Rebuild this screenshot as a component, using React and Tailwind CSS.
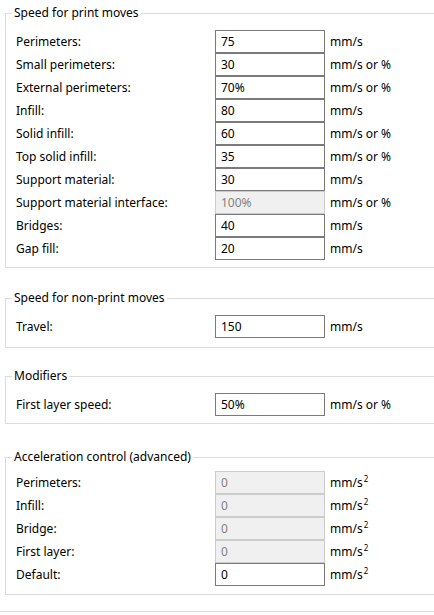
import React from 'react';

const groups = [
  {
    title: 'Speed for print moves',
    cls: 'mt-[5px] pt-[9px] pb-[7px]',
    rows: [
      ['Perimeters:', '75', 'mm/s'],
      ['Small perimeters:', '30', 'mm/s or %'],
      ['External perimeters:', '70%', 'mm/s or %'],
      ['Infill:', '80', 'mm/s'],
      ['Solid infill:', '60', 'mm/s or %'],
      ['Top solid infill:', '35', 'mm/s or %'],
      ['Support material:', '30', 'mm/s'],
      ['Support material interface:', '100%', 'mm/s or %', true],
      ['Bridges:', '40', 'mm/s'],
      ['Gap fill:', '20', 'mm/s'],
    ],
  },
  {
    title: 'Speed for non-print moves',
    cls: 'mt-[22px] pt-[9px] pb-[9px]',
    rows: [['Travel:', '150', 'mm/s']],
  },
  {
    title: 'Modifiers',
    cls: 'mt-[20px] pt-[9px] pb-[7px]',
    rows: [['First layer speed:', '50%', 'mm/s or %']],
  },
  {
    title: 'Acceleration control (advanced)',
    cls: 'mt-[25px] pt-[6px] pb-[8px]',
    sq: true,
    rows: [
      ['Perimeters:', '0', 'mm/s', true],
      ['Infill:', '0', 'mm/s', true],
      ['Bridge:', '0', 'mm/s', true],
      ['First layer:', '0', 'mm/s', true],
      ['Default:', '0', 'mm/s'],
    ],
  },
];

function Row({ label, value, unit, disabled, sq }) {
  return (
    <div className="flex h-[23px] items-center pl-[10px]">
      <div className="w-[199px] shrink-0">{label}</div>
      <div
        className={
          'flex h-full w-[110px] shrink-0 items-center border pl-[5px] ' +
          (disabled
            ? 'border-[#cccccc] bg-[#f0f0f0] text-[#838383]'
            : 'border-[#7a7a7a] bg-white text-black')
        }
      >
        {value}
      </div>
      <div className="ml-[5px] flex items-start">
        {unit}
        {sq && <span className="ml-[1px] text-[8px] leading-[8px]">2</span>}
      </div>
    </div>
  );
}

export default function App() {
  return (
    <div
      className="h-[615px] w-[434px] overflow-hidden bg-white text-[12px] leading-[16px] text-black"
      style={{ fontFamily: '"Noto Sans", "Segoe UI", sans-serif' }}
    >
      {groups.map((g) => (
        <fieldset
          key={g.title}
          className={'ml-[5px] w-[460px] border border-[#dcdcdc] px-0 ' + g.cls}
        >
          <legend className="ml-[6px] px-[2px]">{g.title}</legend>
          {g.rows.map((r) => (
            <Row key={r[0]} label={r[0]} value={r[1]} unit={r[2]} disabled={r[3]} sq={g.sq} />
          ))}
        </fieldset>
      ))}
      <div className="mt-[16px] border-t border-[#dcdcdc]" />
    </div>
  );
}
